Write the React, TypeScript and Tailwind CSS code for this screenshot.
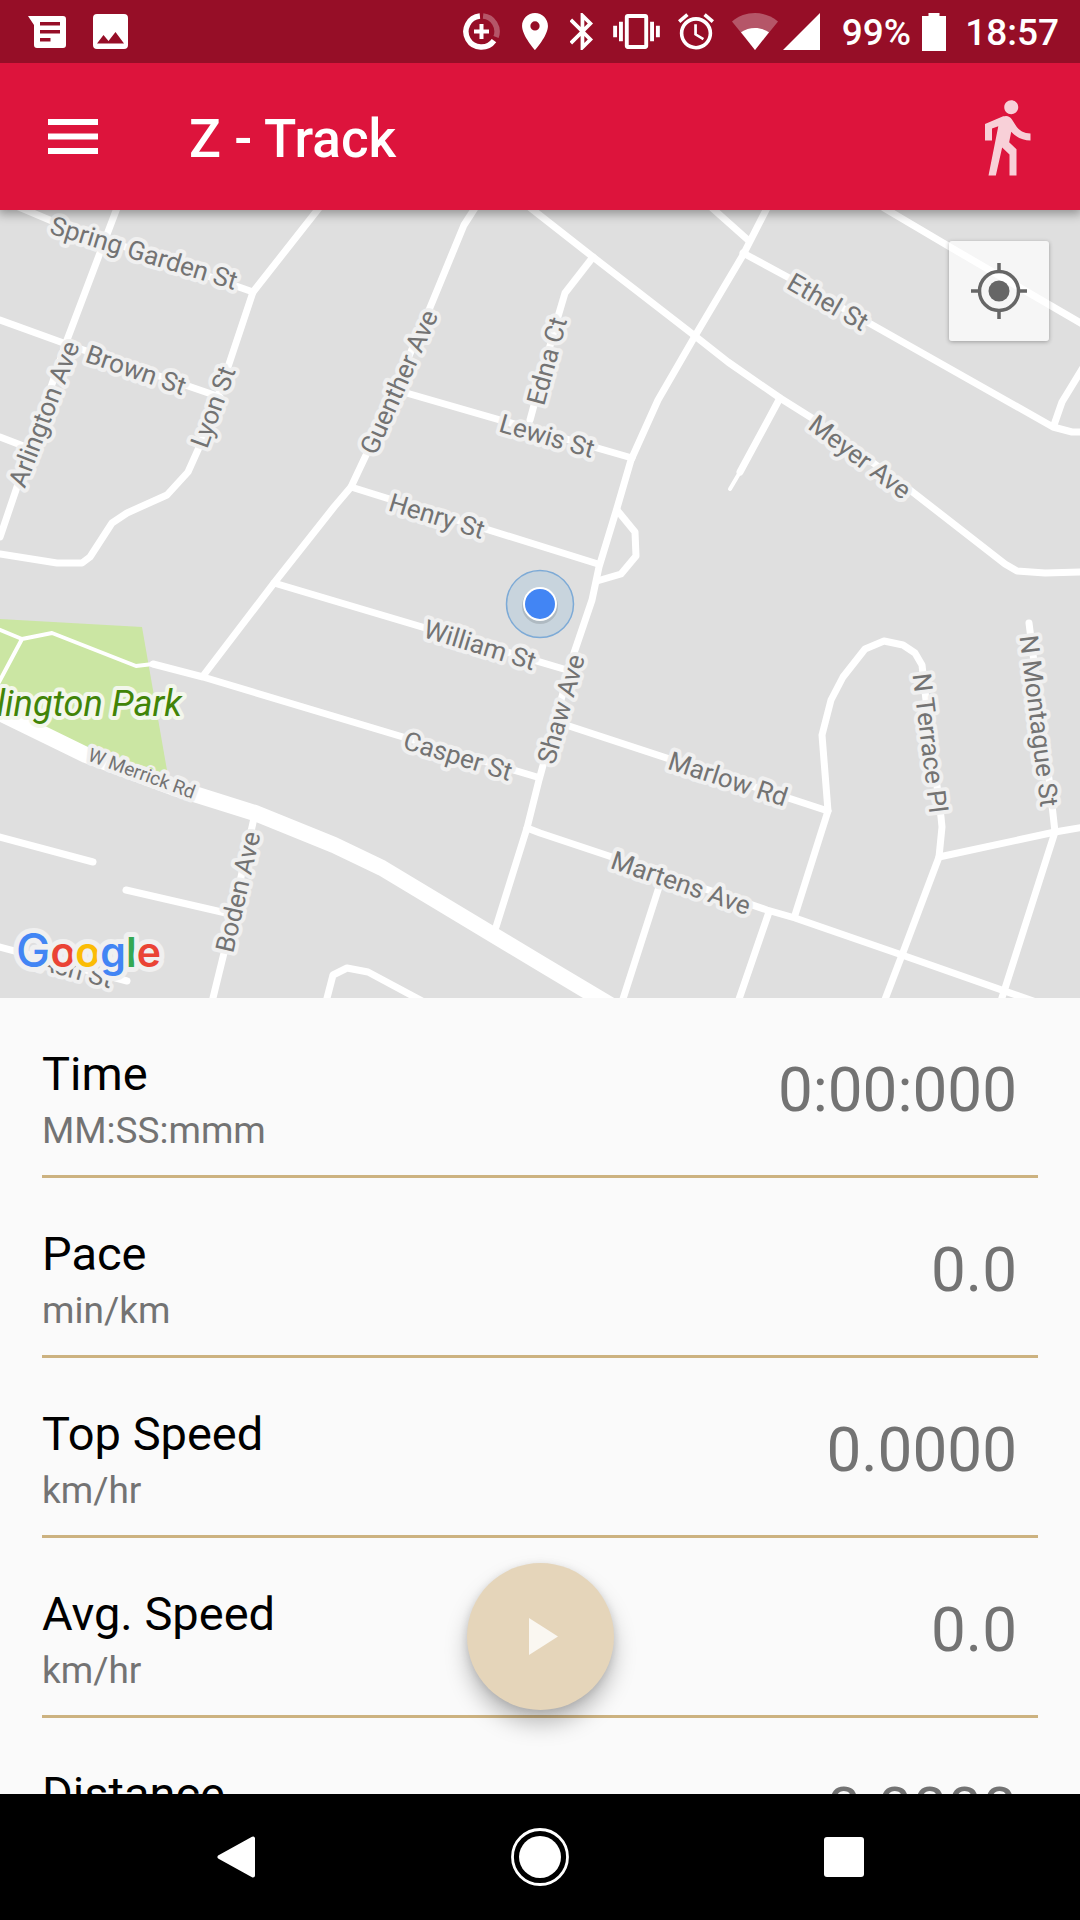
import React from "react";
import {
  MdAlarm,
  MdBluetooth,
  MdDirectionsWalk,
  MdLocationOn,
  MdVibration,
} from "react-icons/md";

const minorRoads = [
  "M14 205 L52 221 L253 292",
  "M117 208 L67 340 L0 537",
  "M0 320 L69 345 L220 397",
  "M0 437 L26 447",
  "M319 208 L253 292 L227 370 L201 443 L188 472 L167 495 L127 513 L112 523 L90 557 L82 563 L57 563 L0 554",
  "M475 208 L464 225 L429 310 L367 453 L351 487 L334 507 L274 583 L203 676",
  "M403 392 L632 458",
  "M351 487 L598 564",
  "M274 583 L567 670",
  "M528 206 L593 257 L695 336 L728 362 L780 398 L815 420 L910 490 L1005 564 L1017 571 L1045 573 L1084 572",
  "M593 257 L565 293 L557 320 L530 420",
  "M767 208 L743 255 L695 336 L658 400 L631 460 L617 508 L599 567 L592 600 L574 653 L539 780 L527 828 L496 927",
  "M712 208 L748 240",
  "M743 253 L793 280 L1053 427 L1072 432 L1084 432",
  "M884 208 L950 247 L1084 325",
  "M1084 366 L1062 402 L1054 425",
  "M780 398 L740 472",
  "M617 510 L635 532 L636 556 L621 574 L597 581",
  "M153 664 L203 677 L403 737 L537 777",
  "M-4 836 L93 862",
  "M126 890 L226 913",
  "M254 818 L241 877 L224 953 L212 1002",
  "M-4 946 L127 981",
  "M326 1002 L333 975 L347 968 L368 972 L424 1002",
  "M566 725 L828 811",
  "M527 828 L540 833 L609 856 L767 910 L795 918 L902 955 L1036 1002",
  "M795 915 L828 811 L822 735 L831 700 L843 677 L865 649 L884 641 L903 645 L915 653 L922 665 L926 700 L941 817 L942 827 L939 857 L902 955 L884 1002",
  "M939 857 L1055 832 L1084 827",
  "M1029 623 L1050 787 L1055 832 L1000 1004",
  "M659 887 L622 1002",
  "M769 912 L738 1002",
];

const streetLabels = [
  { name: "Spring Garden St", x: 144, y: 253, angle: 17, size: 26 },
  { name: "Brown St", x: 136, y: 370, angle: 19, size: 26 },
  { name: "Arlington Ave", x: 44, y: 414, angle: -69, size: 26 },
  { name: "Lyon St", x: 213, y: 407, angle: -70, size: 26 },
  { name: "Guenther Ave", x: 399, y: 382, angle: -66, size: 26 },
  { name: "Edna Ct", x: 547, y: 361, angle: -75, size: 26 },
  { name: "Lewis St", x: 547, y: 436, angle: 16, size: 26 },
  { name: "Henry St", x: 437, y: 516, angle: 17, size: 26 },
  { name: "Ethel St", x: 828, y: 302, angle: 30, size: 26 },
  { name: "Meyer Ave", x: 860, y: 457, angle: 37, size: 26 },
  { name: "William St", x: 480, y: 645, angle: 17, size: 26 },
  { name: "Shaw Ave", x: 561, y: 709, angle: -74, size: 26 },
  { name: "Casper St", x: 458, y: 756, angle: 17, size: 26 },
  { name: "Marlow Rd", x: 728, y: 779, angle: 18, size: 26 },
  { name: "Martens Ave", x: 681, y: 883, angle: 19, size: 26 },
  { name: "N Terrace Pl", x: 930, y: 743, angle: 83, size: 26 },
  { name: "N Montague St", x: 1039, y: 721, angle: 83, size: 26 },
  { name: "Boden Ave", x: 238, y: 892, angle: -77, size: 26 },
  { name: "W Merrick Rd", x: 142, y: 773, angle: 20, size: 19 },
  { name: "Ash St", x: 76, y: 970, angle: 15, size: 26 },
];

const metrics = [
  { label: "Time", unit: "MM:SS:mmm", value: "0:00:000" },
  { label: "Pace", unit: "min/km", value: "0.0" },
  { label: "Top Speed", unit: "km/hr", value: "0.0000" },
  { label: "Avg. Speed", unit: "km/hr", value: "0.0" },
  { label: "Distance", unit: "km", value: "0.0000" },
];

function StatusBar() {
  return (
    <div className="relative z-20 flex h-[63px] shrink-0 items-center bg-[#960e27] pr-[21px] pl-7 text-white">
      <div className="flex items-center gap-[27px]">
        <svg width="38" height="32" viewBox="0 0 38 32" fill="currentColor" aria-hidden="true">
          <path
            fillRule="evenodd"
            d="M0 0H35a3 3 0 0 1 3 3V29a3 3 0 0 1-3 3H9a3 3 0 0 1-3-3V9ZM12 6V9.500H32V6ZM12 14V17.500H32V14ZM12 22V25.500H22.500V22Z"
          />
        </svg>
        <svg width="35" height="35" viewBox="0 0 35 35" fill="currentColor" aria-hidden="true">
          <path
            fillRule="evenodd"
            d="M4 0H31a4 4 0 0 1 4 4V31a4 4 0 0 1-4 4H4a4 4 0 0 1-4-4V4a4 4 0 0 1 4-4ZM4 29.500H31L22.500 18 15.500 27 10.500 21Z"
          />
        </svg>
      </div>
      <div className="ml-auto flex items-center">
        <div className="flex items-center gap-[22px]">
          <svg width="37" height="37" viewBox="0 0 37 37" fill="none" stroke="currentColor" aria-hidden="true">
            <path d="M31 27.600A15.500 15.500 0 1 1 16.900 3.100" strokeWidth="5.500" />
            <path d="M20.100 3.100A15.500 15.500 0 0 1 33 24.100" strokeWidth="5.500" opacity="0.300" />
            <path d="M18.500 11V26M11 18.500H26" strokeWidth="4" />
          </svg>
          <MdLocationOn viewBox="5 2 14 20" className="h-[37px] w-[26px]" />
          <MdBluetooth viewBox="5.500 2 12.500 20" className="h-[37px] w-[24px]" />
        </div>
        <div className="ml-[19px] flex items-center gap-[18px]">
          <MdVibration viewBox="0 3 24 18" className="h-[35px] w-[47px]" />
          <MdAlarm viewBox="2 2 20 20" className="h-[37px] w-[36px]" />
          <div className="flex items-center gap-[5px]">
            <svg width="46" height="37" viewBox="0 0 46 37" fill="currentColor" aria-hidden="true">
              <path d="M23 37L0 8.500C13-2.800 33-2.800 46 8.500Z" opacity="0.300" />
              <path d="M23 37L9 19.300C17 13.500 29 13.500 37 19.300Z" />
            </svg>
            <svg width="37" height="37" viewBox="0 0 37 37" fill="currentColor" aria-hidden="true">
              <path d="M0 37H37V0Z" />
            </svg>
          </div>
        </div>
        <span className="ml-[22px] pt-0.5 text-[37px] leading-[44px] font-medium">99%</span>
        <svg className="ml-[11px]" width="24" height="38" viewBox="0 0 24 38" fill="currentColor" aria-hidden="true">
          <path d="M6.500 0H17.500V3H24V38H0V3H6.500Z" />
        </svg>
        <span className="ml-[19px] pt-0.5 text-[37px] leading-[44px] font-medium">18:57</span>
      </div>
    </div>
  );
}

function AppBar() {
  return (
    <header className="relative z-10 flex h-[147px] shrink-0 items-center bg-[#dd143c] pr-8 pl-12 text-white shadow-[0_2px_10px_2px_rgba(0,0,0,0.35)]">
      <button type="button" aria-label="Open menu">
        <svg width="50" height="35" viewBox="0 0 50 35" fill="currentColor" aria-hidden="true">
          <path d="M0 0H50V6H0ZM0 14.500H50V20.500H0ZM0 29H50V35H0Z" />
        </svg>
      </button>
      <h1 className="ml-[91px] pt-1 text-[53px] leading-[64px] font-medium">Z - Track</h1>
      <button type="button" aria-label="Activity: walking" className="ml-auto text-white/80">
        <MdDirectionsWalk className="size-[84px]" />
      </button>
    </header>
  );
}

function StreetMap() {
  return (
    <section aria-label="Map" className="relative min-h-0 flex-[197] overflow-hidden bg-[#dfdfdf]">
      <svg
        className="block h-full w-full"
        viewBox="0 210 1080 788"
        preserveAspectRatio="xMidYMid slice"
        fontFamily="Roboto, sans-serif"
      >
        <path d="M-2 619 L142 627 L168 776 L86 755 L-2 713Z" fill="#cbe6a3" />
        <g fill="none" stroke="#fff" strokeLinejoin="round" strokeLinecap="round">
          <path d="M-2 629 L22 639 L52 633 L136 666 L153 664 M22 639 L-2 684" strokeWidth="4" />
          <path d="M740 472 L730 489" strokeWidth="4" />
          {minorRoads.map((d) => (
            <path key={d} d={d} strokeWidth="7" />
          ))}
          <path
            d="M-10 708 L0 713 L86 755 L172 787 L255 813 L334 845 L382 868 L540 963 L612 1006"
            strokeWidth="16"
          />
        </g>
        <g
          fill="#737373"
          stroke="#f0f0f0"
          strokeWidth="8"
          strokeLinejoin="round"
          paintOrder="stroke"
          textAnchor="middle"
        >
          {streetLabels.map((s) => (
            <text
              key={s.name}
              fontSize={s.size}
              transform={`translate(${s.x} ${s.y}) rotate(${s.angle})`}
              y={s.size === 19 ? 7 : 9}
            >
              {s.name}
            </text>
          ))}
        </g>
        <text
          x="182"
          y="716"
          textAnchor="end"
          fontSize="36"
          fontStyle="italic"
          fill="#418407"
          stroke="#f3f7ec"
          strokeWidth="8"
          strokeLinejoin="round"
          paintOrder="stroke"
        >
          Arlington Park
        </text>
        <text
          x="16"
          y="967"
          fontFamily="Inter, sans-serif"
          fontSize="41"
          fontWeight="600"
          stroke="#f0f0f0"
          strokeWidth="10"
          strokeLinejoin="round"
          paintOrder="stroke"
        >
          <tspan fill="#4285f4" fontSize="46" fontWeight="500">G</tspan>
          <tspan fill="#ea4335">o</tspan>
          <tspan fill="#fbbc05">o</tspan>
          <tspan fill="#4285f4">g</tspan>
          <tspan fill="#34a853">l</tspan>
          <tspan fill="#ea4335">e</tspan>
        </text>
        <circle cx="540" cy="604" r="33.500" fill="#4a9bd6" fillOpacity="0.150" stroke="#7daad6" strokeWidth="1.500" />
        <circle cx="540" cy="606" r="18" fill="#000" opacity="0.120" />
        <circle cx="540" cy="604" r="17" fill="#fff" />
        <circle cx="540" cy="604" r="15" fill="#4285f4" />
      </svg>
      <button
        type="button"
        aria-label="My location"
        className="absolute top-[31px] right-[31px] flex size-[100px] items-center justify-center rounded-[3px] bg-white/70 text-[#666] shadow-[0_1px_4px_rgba(0,0,0,0.3)]"
      >
        <svg width="56" height="56" viewBox="0 0 56 56" fill="none" stroke="currentColor" strokeWidth="3.500" aria-hidden="true">
          <circle cx="28" cy="28" r="19.500" />
          <circle cx="28" cy="28" r="10.500" fill="currentColor" stroke="none" />
          <path d="M28 0V8M28 48V56M0 28H8M48 28H56" />
        </svg>
      </button>
    </section>
  );
}

function Metrics() {
  return (
    <main className="relative min-h-0 flex-[199]">
      <dl className="h-full overflow-hidden px-[42px]">
        {metrics.map((m) => (
          <div
            key={m.label}
            className="flex items-start justify-between border-b-[3px] border-[#ccb280] pt-12 pr-[21px] pb-[15px]"
          >
            <dt>
              <span className="block text-[47px] leading-[56px] text-black">{m.label}</span>
              <span className="block text-[37px] leading-[58px] text-[#737373]">{m.unit}</span>
            </dt>
            <dd className="text-[62px] leading-[88px] text-[#737373]">{m.value}</dd>
          </div>
        ))}
      </dl>
      <div className="pointer-events-none absolute inset-x-0 bottom-[84px] flex justify-center">
        <button
          type="button"
          aria-label="Start tracking"
          className="pointer-events-auto flex size-[147px] items-center justify-center rounded-full bg-[#e5d5ba] text-white/80 shadow-[0_14px_22px_rgba(0,0,0,0.25),0_2px_8px_rgba(0,0,0,0.12)]"
        >
          <svg width="36" height="37" viewBox="0 0 36 37" fill="currentColor" aria-hidden="true">
            <path d="M7 0V37L36 18.500Z" />
          </svg>
        </button>
      </div>
    </main>
  );
}

function NavigationBar() {
  return (
    <nav aria-label="System" className="grid h-[126px] shrink-0 grid-cols-3 bg-black px-[84px] text-white">
      <button type="button" aria-label="Back" className="flex items-center justify-center">
        <svg width="38" height="42" viewBox="0 0 38 42" fill="currentColor" stroke="currentColor" strokeWidth="4" strokeLinejoin="round" aria-hidden="true">
          <path d="M2.500 21L36 2.500V39.500Z" />
        </svg>
      </button>
      <button type="button" aria-label="Home" className="flex items-center justify-center">
        <svg width="58" height="58" viewBox="0 0 58 58" fill="none" aria-hidden="true">
          <circle cx="29" cy="29" r="27.500" stroke="currentColor" strokeWidth="2.800" />
          <circle cx="29" cy="29" r="21" fill="currentColor" />
        </svg>
      </button>
      <button type="button" aria-label="Recent apps" className="flex items-center justify-center">
        <span className="size-10 rounded-[3px] bg-white" />
      </button>
    </nav>
  );
}

export default function App() {
  return (
    <div className="flex h-screen flex-col overflow-hidden bg-[#fafafa] font-[Roboto,sans-serif]">
      <StatusBar />
      <AppBar />
      <StreetMap />
      <Metrics />
      <NavigationBar />
    </div>
  );
}
